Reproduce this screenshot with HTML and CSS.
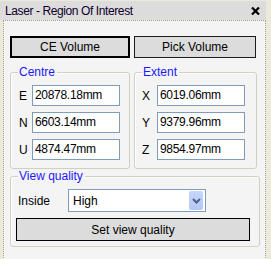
FILE: index.html
```html
<!DOCTYPE html>
<html>
<head>
<meta charset="utf-8">
<link rel="stylesheet" href="styles.css">
</head>
<body>
<div class="window">
  <div class="titlebar">
    <span class="title">Laser - Region Of Interest</span>
    <svg class="close" width="9" height="8" viewBox="0 0 9 8"><path d="M1 0.5 L8 7.5 M8 0.5 L1 7.5" stroke="#000" stroke-width="2.2"/></svg>
  </div>
  <div class="panel">
    <div class="btnrow">
      <button class="btn btn-default w-ce">CE Volume</button>
      <button class="btn w-pick">Pick Volume</button>
    </div>
    <div class="grouprow">
      <div class="group g-centre">
        <span class="legend">Centre</span>
        <div class="fields f-centre">
          <span class="lbl">E</span><div class="input">20878.18mm</div>
          <span class="lbl">N</span><div class="input">6603.14mm</div>
          <span class="lbl">U</span><div class="input">4874.47mm</div>
        </div>
      </div>
      <div class="group g-extent">
        <span class="legend">Extent</span>
        <div class="fields f-extent">
          <span class="lbl">X</span><div class="input">6019.06mm</div>
          <span class="lbl">Y</span><div class="input">9379.96mm</div>
          <span class="lbl">Z</span><div class="input">9854.97mm</div>
        </div>
      </div>
    </div>
    <div class="group g-view">
      <span class="legend">View quality</span>
      <div class="viewrow">
        <span class="inside">Inside</span>
        <div class="select">
          <span class="selval">High</span>
          <span class="dd"><svg width="9" height="6" viewBox="0 0 9 6"><path d="M1 1 L4.5 4.5 L8 1" fill="none" stroke="#4d6185" stroke-width="2"/></svg></span>
        </div>
      </div>
      <button class="btn w-set">Set view quality</button>
    </div>
  </div>
</div>
</body>
</html>
```

FILE: styles.css
```css
html, body {
  margin: 0;
  padding: 0;
  background: #ece9d8;
  font-family: "Liberation Sans", Arial, sans-serif;
  font-size: 12px;
  color: #000;
}
.window {
  width: 266px;
  padding-top: 1px;
}
.titlebar {
  height: 19px;
  background: #dcdcdc;
  display: flex;
  align-items: center;
  justify-content: space-between;
  padding: 0 6px 0 5px;
}
.title {
  font-size: 12px;
  color: #10002a;
  letter-spacing: -0.4px;
}
.close { display: block; }
.panel {
  margin-left: 3px;
  height: 233px;
  border: 1px dotted #a09d8c;
  background: #f4f4f4;
  padding: 15px 0 0 6px;
  box-sizing: content-box;
}
.btnrow {
  display: flex;
  gap: 4px;
}
.btn {
  font-family: "Liberation Sans", Arial, sans-serif;
  font-size: 12px;
  color: #000;
  background: #dcdcdc;
  border: 1px solid #1c1c1c;
  height: 22px;
  padding: 0;
  margin: 0;
  box-sizing: border-box;
}
.btn-default { border: 2px solid #000; }
.w-ce { width: 120px; }
.w-pick { width: 122px; }
.grouprow {
  display: flex;
  gap: 4px;
  margin-top: 14px;
}
.group {
  position: relative;
  border: 1px solid #d0d0bf;
  border-radius: 3px;
  box-shadow: inset 1px 1px 0 #fff;
  box-sizing: border-box;
}
.legend {
  position: absolute;
  top: -8px;
  left: 7px;
  padding: 0 2px 0 1px;
  background: #f4f4f4;
  color: #1a1aff;
  line-height: 14px;
}
.g-centre { width: 120px; height: 97px; }
.g-extent { width: 123px; height: 97px; }
.fields {
  display: grid;
  row-gap: 6px;
  align-items: center;
  padding-top: 12px;
}
.f-centre { grid-template-columns: 13px 88px; padding-left: 8px; }
.f-extent { grid-template-columns: 15px 88px; padding-left: 7px; }
.lbl { line-height: 14px; }
.input {
  height: 21px;
  box-sizing: border-box;
  border: 1px solid #7f9db9;
  background: #fff;
  padding: 0 0 0 2px;
  line-height: 19px;
  color: #000;
  letter-spacing: -0.3px;
}
.g-view {
  width: 250px;
  height: 71px;
  margin-top: 7px;
  padding: 12px 0 0 5px;
}
.viewrow {
  display: flex;
  align-items: center;
}
.inside {
  width: 50px;
  padding-left: 2px;
}
.select {
  width: 138px;
  height: 23px;
  box-sizing: border-box;
  border: 1px solid #7f9db9;
  background: #fff;
  display: flex;
  align-items: center;
  justify-content: space-between;
  padding: 0 2px 0 4px;
}
.dd {
  width: 14px;
  height: 19px;
  background: linear-gradient(#c6d6fb, #b4c8f6);
  border-radius: 2px;
  display: flex;
  align-items: center;
  justify-content: center;
}
.w-set {
  width: 234px;
  height: 23px;
  margin-top: 6px;
  border-color: #000;
}
```
